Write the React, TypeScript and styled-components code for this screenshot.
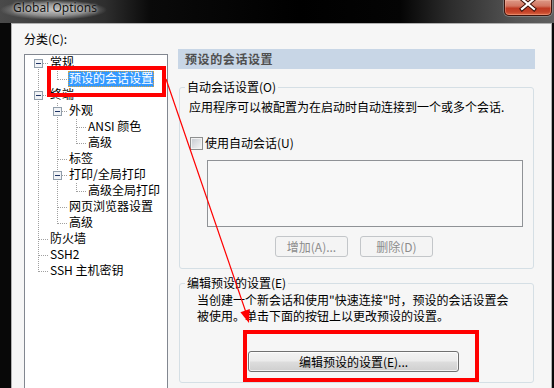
import React from 'react';
import styled, { createGlobalStyle } from 'styled-components';

const GlobalStyle = createGlobalStyle`
  html, body { margin: 0; padding: 0; background: #000; }
  body { font-family: "Noto Sans CJK SC", "Noto Sans", sans-serif; font-size: 12px; color: #000; }
  * { box-sizing: border-box; }
`;

const Window = styled.div`
  position: relative;
  width: 554px;
  height: 388px;
  overflow: hidden;
  background: #080808;
  display: flex;
  flex-direction: column;
`;

const TitleBar = styled.div`
  height: 23px;
  flex: none;
  display: flex;
  align-items: flex-start;
  background: linear-gradient(90deg, #4a4a4a 0px, #2e2e2e 105px, #0a0a0a 150px, #000 300px, #040404 400px, #2c2c2c 450px, #545454 515px, #606060 554px);
`;

const Title = styled.span`
  height: 22px;
  padding: 0 10px 0 13px;
  font-family: "Noto Sans", "Open Sans", sans-serif;
  font-size: 12px;
  line-height: 16px;
  color: #141414;
  white-space: nowrap;
  background: radial-gradient(ellipse closest-side at 50% 45%, rgba(200,200,200,0.95) 0%, rgba(160,160,160,0.8) 60%, rgba(110,110,110,0) 100%);
  text-shadow: 0 0 3px rgba(235, 235, 235, 0.8);
`;

const CloseButton = styled.div`
  margin-left: auto;
  margin-right: 2px;
  width: 48px;
  height: 16px;
  display: flex;
  justify-content: center;
  border: 1px solid #3d130b;
  border-top: none;
  border-radius: 0 0 5px 5px;
  background: linear-gradient(#dc9886 0%, #d27560 40%, #bf3a22 55%, #c5442a 80%, #dd6a45 100%);
  box-shadow: 0 0 0 1px rgba(200, 200, 200, 0.35), inset 0 0 0 1px rgba(255, 200, 180, 0.35);
`;

const FrameBody = styled.div`
  flex: 1;
  min-height: 0;
  display: flex;
  padding: 0 2px 0 11px;
`;

const Client = styled.div`
  flex: 1;
  border: 1px solid #b0b0b0;
  border-bottom: none;
  background: #f6f6f6;
  display: grid;
  grid-template-columns: 144px 357px;
  column-gap: 10px;
  align-items: start;
  padding: 8px 0 0 12px;
`;

const LeftColumn = styled.div`
  display: flex;
  flex-direction: column;
`;

const FieldLabel = styled.div`
  height: 14px;
  line-height: 14px;
  white-space: nowrap;
`;

const TreeBox = styled.div`
  margin-top: 8px;
  height: 360px;
  border: 1px solid #828790;
  background: #fff;
  padding: 0 0 0 4px;
`;

const TreeRow = styled.div`
  display: flex;
  height: 16px;
`;

const NodeLabel = styled.span<{ $selected?: boolean }>`
  height: 16px;
  margin-left: 1px;
  padding: 0;
  border: 1px ${(p) => (p.$selected ? 'dotted #d9a441' : 'solid transparent')};
  line-height: 12px;
  white-space: nowrap;
  background: ${(p) => (p.$selected ? '#3399ff' : 'transparent')};
  color: ${(p) => (p.$selected ? '#fff' : '#000')};
`;

const RightColumn = styled.div`
  margin-top: 17px;
  display: flex;
  flex-direction: column;
`;

const PageHeader = styled.div`
  height: 20px;
  padding: 3px 0 0 7px;
  line-height: 14px;
  font-weight: bold;
  letter-spacing: 0.6px;
  color: #4f4f4f;
  background: #c8d6e6;
  white-space: nowrap;
`;

const GroupBox = styled.fieldset<{ $gap: number }>`
  margin: ${(p) => p.$gap}px 0 0 1px;
  width: 355px;
  min-width: 0;
  padding: 0;
  border: 1px solid #d5dfe5;
  border-radius: 3px;
`;

const Legend = styled.legend`
  margin-left: 5px;
  padding: 0 2px;
  font-size: 12px;
  line-height: 14px;
  white-space: nowrap;
`;

const GroupInner = styled.div<{ $pad: string }>`
  display: flex;
  flex-direction: column;
  align-items: flex-start;
  padding: ${(p) => p.$pad};
`;

const TextLine = styled.div<{ $h?: number }>`
  height: ${(p) => p.$h ?? 14}px;
  line-height: ${(p) => p.$h ?? 14}px;
  white-space: nowrap;
`;

const CheckRow = styled.label`
  display: flex;
  align-items: center;
  gap: 2px;
  margin-top: 22px;
  padding-left: 1px;
  height: 14px;
  line-height: 14px;
  white-space: nowrap;
`;

const CheckBox = styled.span`
  width: 13px;
  height: 13px;
  border: 1px solid #8e8f8f;
  padding: 1px;
  background: linear-gradient(135deg, #c9cdd3, #f4f4f4) content-box, #f2f2f2;
`;

const ListBox = styled.div`
  margin: 10px 0 0 18px;
  width: 316px;
  height: 67px;
  border: 1px solid #8f9296;
  background: #f8f8f8;
`;

const ButtonRow = styled.div`
  display: flex;
  gap: 12px;
  margin-top: 9px;
  padding-left: 86px;
`;

const PushButton = styled.div<{ $disabled?: boolean; $width: number }>`
  width: ${(p) => p.$width}px;
  height: 21px;
  display: flex;
  align-items: center;
  justify-content: center;
  line-height: 14px;
  white-space: nowrap;
  border-radius: 3px;
  border: 1px solid ${(p) => (p.$disabled ? '#c3c6c9' : '#707070')};
  color: ${(p) => (p.$disabled ? '#8c8c8c' : '#000')};
  background: ${(p) =>
    p.$disabled
      ? '#f4f4f4'
      : 'linear-gradient(#f3f3f3 0%, #ebebeb 48%, #dddddd 52%, #cfcfcf 100%)'};
  box-shadow: ${(p) => (p.$disabled ? 'none' : 'inset 0 0 0 1px rgba(255,255,255,0.7)')};
`;

const Overlay = styled.svg`
  position: absolute;
  left: 0;
  top: 0;
  pointer-events: none;
`;

type V = 'full' | 'top' | 'bottom' | 'none';
type GuideSpec = { v: V; h?: boolean; box?: boolean };

const LINE = '#a0a0a0';

function Guide({ v, h, box }: GuideSpec) {
  return (
    <svg width="19" height="16" viewBox="0 0 19 16" shapeRendering="crispEdges" style={{ flex: 'none' }}>
      {v === 'full' && <line x1="9.5" y1="0" x2="9.5" y2="16" stroke={LINE} strokeDasharray="1 1" />}
      {v === 'top' && <line x1="9.5" y1="0" x2="9.5" y2="9" stroke={LINE} strokeDasharray="1 1" />}
      {v === 'bottom' && <line x1="9.5" y1="8" x2="9.5" y2="16" stroke={LINE} strokeDasharray="1 1" />}
      {h && <line x1={box ? 14 : 10} y1="8.5" x2="19" y2="8.5" stroke={LINE} strokeDasharray="1 1" />}
      {box && (
        <g>
          <rect x="5.5" y="4.5" width="8" height="8" fill="#f1f3f6" stroke="#919eab" />
          <line x1="7" y1="8.5" x2="12" y2="8.5" stroke="#1f3566" />
        </g>
      )}
    </svg>
  );
}

type Node = { label: string; guides: GuideSpec[]; selected?: boolean };

const nodes: Node[] = [
  { label: '常规', guides: [{ v: 'bottom', h: true, box: true }] },
  { label: '预设的会话设置', guides: [{ v: 'full' }, { v: 'top', h: true }], selected: true },
  { label: '终端', guides: [{ v: 'full', h: true, box: true }] },
  { label: '外观', guides: [{ v: 'full' }, { v: 'full', h: true, box: true }] },
  { label: 'ANSI 颜色', guides: [{ v: 'full' }, { v: 'full' }, { v: 'full', h: true }] },
  { label: '高级', guides: [{ v: 'full' }, { v: 'full' }, { v: 'top', h: true }] },
  { label: '标签', guides: [{ v: 'full' }, { v: 'full', h: true }] },
  { label: '打印/全局打印', guides: [{ v: 'full' }, { v: 'full', h: true, box: true }] },
  { label: '高级全局打印', guides: [{ v: 'full' }, { v: 'full' }, { v: 'top', h: true }] },
  { label: '网页浏览器设置', guides: [{ v: 'full' }, { v: 'full', h: true }] },
  { label: '高级', guides: [{ v: 'full' }, { v: 'top', h: true }] },
  { label: '防火墙', guides: [{ v: 'full', h: true }] },
  { label: 'SSH2', guides: [{ v: 'full', h: true }] },
  { label: 'SSH 主机密钥', guides: [{ v: 'top', h: true }] },
];

export default function App() {
  return (
    <>
      <GlobalStyle />
      <Window>
        <TitleBar>
          <Title>Global Options</Title>
          <CloseButton>
            <svg width="20" height="12" viewBox="0 0 20 12">
              <path d="M4 -1 L16 9 M16 -1 L4 9" stroke="#3a0d05" strokeWidth="4.2" strokeLinecap="square" />
              <path d="M4 -1 L16 9 M16 -1 L4 9" stroke="#ffffff" strokeWidth="2.2" strokeLinecap="square" />
            </svg>
          </CloseButton>
        </TitleBar>
        <FrameBody>
          <Client>
            <LeftColumn>
              <FieldLabel>分类(C):</FieldLabel>
              <TreeBox>
                {nodes.map((n, i) => (
                  <TreeRow key={i}>
                    {n.guides.map((g, j) => (
                      <Guide key={j} {...g} />
                    ))}
                    <NodeLabel $selected={n.selected}>{n.label}</NodeLabel>
                  </TreeRow>
                ))}
              </TreeBox>
            </LeftColumn>
            <RightColumn>
              <PageHeader>预设的会话设置</PageHeader>
              <GroupBox $gap={11}>
                <Legend>自动会话设置(O)</Legend>
                <GroupInner $pad="6px 10px 11px 9px">
                  <TextLine>应用程序可以被配置为在启动时自动连接到一个或多个会话.</TextLine>
                  <CheckRow>
                    <CheckBox />
                    <span>使用自动会话(U)</span>
                  </CheckRow>
                  <ListBox />
                  <ButtonRow>
                    <PushButton $disabled $width={73}>增加(A)...</PushButton>
                    <PushButton $disabled $width={73}>删除(D)</PushButton>
                  </ButtonRow>
                </GroupInner>
              </GroupBox>
              <GroupBox $gap={7}>
                <Legend>编辑预设的设置(E)</Legend>
                <GroupInner $pad="2px 0 10px 17px">
                  <TextLine $h={16}>当创建一个新会话和使用"快速连接"时，预设的会话设置会</TextLine>
                  <TextLine $h={16}>被使用。单击下面的按钮上以更改预设的设置。</TextLine>
                  <PushButton $width={211} style={{ marginTop: 27, marginLeft: 51 }}>
                    编辑预设的设置(E)...
                  </PushButton>
                </GroupInner>
              </GroupBox>
            </RightColumn>
          </Client>
        </FrameBody>
        <Overlay width="554" height="388" viewBox="0 0 554 388">
          <rect x="49" y="68" width="115" height="27" fill="none" stroke="#ff0000" strokeWidth="4" />
          <rect x="245" y="332" width="232" height="48" fill="none" stroke="#ff0000" strokeWidth="4" />
          <line x1="166" y1="79" x2="245.5" y2="311" stroke="#ff0000" strokeWidth="1.2" />
          <polygon points="240.4,312.2 249.8,309 249,323" fill="#ff0000" />
        </Overlay>
      </Window>
    </>
  );
}
